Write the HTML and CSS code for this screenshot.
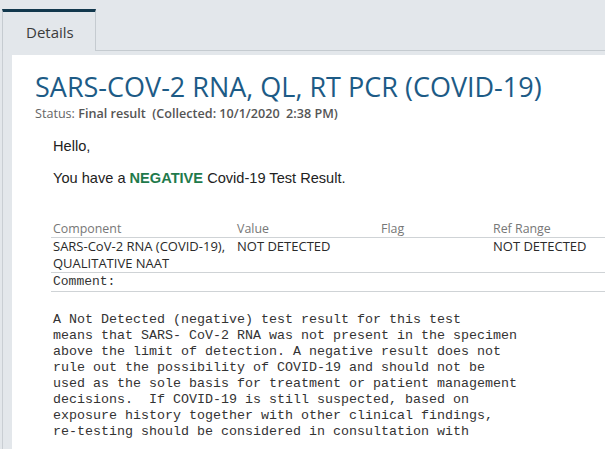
FILE: index.html
```html
<!DOCTYPE html>
<html>
<head>
<meta charset="utf-8">
<link rel="stylesheet" href="styles.css">
</head>
<body>
<div class="tabbar">
  <div class="tab">Details</div>
  <div class="tabrest"></div>
</div>
<div class="frame">
  <div class="card">
    <h1 class="title">SARS-COV-2 RNA, QL, RT PCR (COVID-19)</h1>
    <div class="status">Status: <b>Final result</b>&nbsp; <b>(Collected: 10/1/2020&nbsp; 2:38 PM)</b></div>
    <div class="msg">
      <p class="hello">Hello,</p>
      <p class="result">You have a <b class="neg">NEGATIVE</b> Covid-19 Test Result.</p>
    </div>
    <div class="table">
      <div class="row head">
        <div class="c1">Component</div>
        <div class="c2">Value</div>
        <div class="c3">Flag</div>
        <div class="c4">Ref Range</div>
      </div>
      <div class="row data">
        <div class="c1">SARS-CoV-2 RNA (COVID-19), QUALITATIVE NAAT</div>
        <div class="c2">NOT DETECTED</div>
        <div class="c3"></div>
        <div class="c4">NOT DETECTED</div>
      </div>
      <div class="row comment">Comment:</div>
    </div>
<pre class="note">A Not Detected (negative) test result for this test
means that SARS- CoV-2 RNA was not present in the specimen
above the limit of detection. A negative result does not
rule out the possibility of COVID-19 and should not be
used as the sole basis for treatment or patient management
decisions.  If COVID-19 is still suspected, based on
exposure history together with other clinical findings,
re-testing should be considered in consultation with</pre>
  </div>
</div>
</body>
</html>
```
FILE: styles.css
```css
* { box-sizing: border-box; }
html, body { margin: 0; padding: 0; }
body {
  background: #e3e7eb;
  width: 605px;
  height: 449px;
  overflow: hidden;
  font-family: "Open Sans", "Noto Sans", sans-serif;
}
.tabbar {
  display: flex;
  padding-top: 9px;
  padding-left: 2px;
  height: 51px;
}
.tab {
  width: 94px;
  height: 42px;
  border-top: 3px solid #12384d;
  border-left: 1px solid #c5cbd0;
  border-right: 1px solid #c5cbd0;
  background: #e3e7eb;
  color: #3b3b3b;
  font-size: 15px;
  line-height: 20px;
  padding-left: 23px;
  padding-top: 10px;
}
.tabrest {
  flex: 1;
  border-bottom: 1px solid #c5cbd0;
}
.frame {
  margin-left: 2px;
  border-left: 1px solid #c9ced3;
  padding: 4px 0 0 9px;
  height: 398px;
}
.card {
  background: #fff;
  height: 100%;
  padding: 14px 0 0 23px;
}
.title {
  margin: 0;
  font-weight: 400;
  font-size: 27px;
  line-height: 36px;
  color: #1d5b86;
  white-space: nowrap;
}
.status {
  font-size: 12.6px;
  color: #666;
  line-height: 18px;
  white-space: nowrap;
}
.status b { font-weight: 600; color: #555; }
.msg {
  font-family: "Liberation Sans", Arial, sans-serif;
  font-size: 14.6px;
  color: #222;
  padding-left: 18px;
  margin-top: 14px;
}
.msg p { margin: 0; line-height: 18px; }
.msg .result { margin-top: 14px; }
.neg { color: #1f7a4c; }
.table {
  margin-left: 16px;
  margin-top: 34px;
}
.row {
  display: flex;
  border-bottom: 1px solid #cfd3d6;
  padding-left: 2px;
}
.c1 { width: 184px; }
.c2 { width: 144px; }
.c3 { width: 112px; }
.c4 { flex: 1; }
.head { color: #777; font-size: 12.4px; line-height: 16px; }
.data { color: #2a2a2a; font-size: 13px; line-height: 17px; }
.comment {
  font-family: "Liberation Mono", "Courier New", monospace;
  font-size: 13px;
  line-height: 18px;
  color: #333;
}
.note {
  margin: 20px 0 0 18px;
  font-family: "Liberation Mono", "Courier New", monospace;
  font-size: 13.33px;
  line-height: 16px;
  color: #333;
}
```
